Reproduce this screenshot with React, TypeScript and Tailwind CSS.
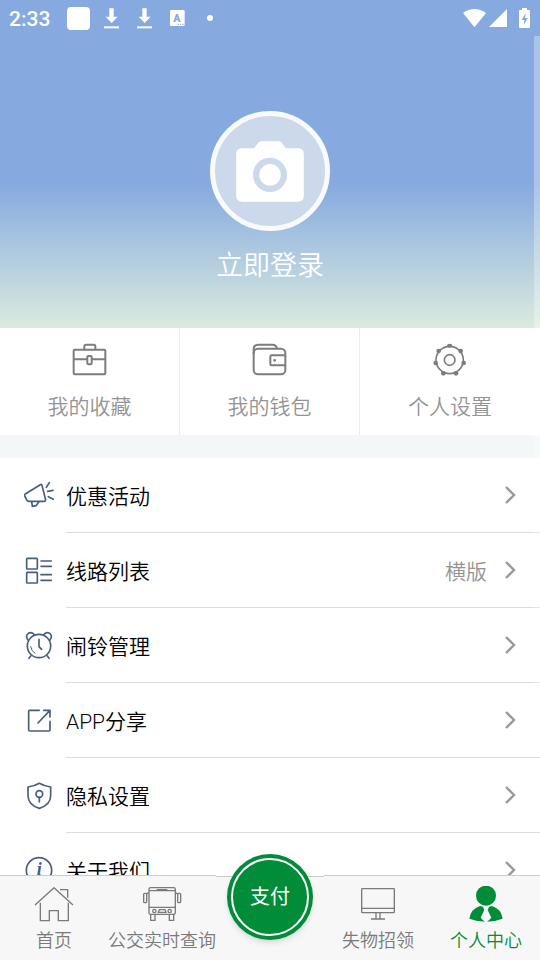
import type { ReactNode } from "react";

function MenuIcon({ children }: { children: ReactNode }) {
  return (
    <svg
      viewBox="0 0 90 90"
      className="size-[30px]"
      fill="none"
      stroke="currentColor"
      strokeWidth="5"
      strokeLinecap="round"
      strokeLinejoin="round"
      aria-hidden="true"
    >
      {children}
    </svg>
  );
}

function QuickIcon({ children }: { children: ReactNode }) {
  return (
    <svg viewBox="0 0 108 108" className="size-9" fill="none" stroke="currentColor" strokeWidth="6" strokeLinejoin="round" aria-hidden="true">
      {children}
    </svg>
  );
}

function TabIcon({ children }: { children: ReactNode }) {
  return (
    <svg viewBox="0 0 120 108" className="h-9 w-10" fill="none" stroke="currentColor" strokeWidth="4" aria-hidden="true">
      {children}
    </svg>
  );
}

function DownloadIcon() {
  return (
    <svg viewBox="0 0 45 63" className="h-[21px] w-[15px]" fill="currentColor" aria-hidden="true">
      <path d="M16 1h13v25h12L23 45 5 26h11z" />
      <path d="M0 55h45v6H0z" />
    </svg>
  );
}

const quickLinks = [
  {
    label: "我的收藏",
    icon: (
      <>
        <rect x="5" y="23" width="95" height="74" rx="3" />
        <path d="M37 23V13q0-5 5-5h23q5 0 5 5v10M5 52h41M59 52h41" />
        <rect x="46" y="42" width="13" height="25" rx="3" />
      </>
    ),
  },
  {
    label: "我的钱包",
    icon: (
      <>
        <rect x="5" y="20" width="95" height="77" rx="13" />
        <path d="M5 36V22Q5 8 19 8h42q12 0 14 12M100 40H59q-4 0-4 4v22q0 4 4 4h41" />
        <circle cx="68" cy="55" r="4" fill="currentColor" stroke="none" />
      </>
    ),
  },
  {
    label: "个人设置",
    icon: (
      <>
        <circle cx="53" cy="54" r="41" strokeWidth="5" />
        <circle cx="53" cy="54" r="16" strokeWidth="5" />
        <g fill="currentColor" stroke="none">
          <ellipse cx="53" cy="11" rx="8" ry="6" />
          <circle cx="86" cy="27" r="7" />
          <circle cx="95" cy="63" r="7" />
          <circle cx="72" cy="94" r="7" />
          <circle cx="34" cy="94" r="7" />
          <circle cx="11" cy="63" r="7" />
          <circle cx="20" cy="27" r="7" />
        </g>
      </>
    ),
  },
];

const menuItems = [
  {
    label: "优惠活动",
    icon: (
      <>
        <path d="M5 38L49 11q4-2 5 2l11 44q0 4-4 4H14q-4 0-5-3L2 45q-1-4 3-7zM23 62l2 14 11-2 9-12" />
        <path d="M67 19l9-14M71 31l16-3M73 47l15 8" />
      </>
    ),
  },
  {
    label: "线路列表",
    value: "横版",
    icon: (
      <>
        <rect x="8" y="7" width="32" height="32" rx="2" />
        <rect x="8" y="49" width="32" height="32" rx="2" />
        <path d="M51 15h31M51 31h31M51 56h31M51 73h31" />
      </>
    ),
  },
  {
    label: "闹铃管理",
    icon: (
      <>
        <circle cx="45" cy="45" r="35" />
        <path d="M12 27Q3 14 13 7q11-6 19 5M78 27q9-13-1-20-11-6-19 5M45 25v22l8 8M20 75l-5 7M70 75l5 7" />
        <path d="M20 47q2 14 13 20" strokeWidth="3" />
      </>
    ),
  },
  {
    label: "APP分享",
    icon: <path d="M46 13H17q-3 0-3 3v56q0 3 3 3h58q3 0 3-3V46M59 13h19v20M42 51l35-37" />,
  },
  {
    label: "隐私设置",
    icon: (
      <>
        <path d="M46 7q15 9 34 11v27q-1 27-34 37Q13 72 12 45V18q19-2 34-11z" />
        <circle cx="46" cy="39" r="10" />
        <path d="M46 49v14" />
      </>
    ),
  },
  {
    label: "关于我们",
    icon: (
      <>
        <circle cx="45" cy="43" r="38" />
        <text
          x="46"
          y="58"
          textAnchor="middle"
          fill="currentColor"
          stroke="none"
          className="font-['Liberation_Serif',serif] text-[54px] font-bold italic"
        >
          i
        </text>
      </>
    ),
  },
];

const leftTabs = [
  {
    label: "首页",
    icon: <path d="M3 57L60 5l57 52M19 50v54h27V74h27v30h30V50M78 11h23v24" strokeLinejoin="round" />,
  },
  {
    label: "公交实时查询",
    icon: (
      <>
        <rect x="21" y="5" width="79" height="80" rx="5" />
        <path d="M21 14h79M21 64h79M44 11h32M14 24q0-3 7-3M107 24q0-3-7-3" />
        <rect x="5" y="22" width="9" height="28" rx="3" />
        <rect x="107" y="22" width="9" height="28" rx="3" />
        <circle cx="37" cy="75" r="5" />
        <circle cx="83" cy="75" r="5" />
        <path d="M52 71h17l3 8H49z" />
        <path d="M26 86v17h13V86M82 86v17h13V86" />
      </>
    ),
  },
];

const rightTabs = [
  {
    label: "失物招领",
    icon: (
      <>
        <rect x="11" y="8" width="98" height="72" rx="2" />
        <path d="M11 67h98M54 80v19M66 80v19M39 99h42" />
      </>
    ),
  },
  {
    label: "个人中心",
    active: true,
    icon: (
      <g stroke="none">
        <circle cx="60" cy="29" r="30" fill="currentColor" />
        <path d="M42 60Q14 69 10 98q50 19 100 0-4-29-32-38-18 6-36 0z" fill="currentColor" />
        <path d="M54 60h12l3 3-4 9 11 23-13 13h-6L44 95l11-23-4-9z" fill="#f7f7f7" />
      </g>
    ),
  },
];

interface TabProps {
  label: string;
  icon: ReactNode;
  active?: boolean;
}

function Tab({ label, icon, active }: TabProps) {
  return (
    <a
      href="#"
      aria-current={active ? "page" : undefined}
      className={`flex flex-1 flex-col items-center gap-[5px] border-t border-[#cccccc] bg-[#f7f7f7] pt-[10px] ${
        active ? "text-[#008c38]" : "text-[#7a7a7a]"
      }`}
    >
      <TabIcon>{icon}</TabIcon>
      <span className="text-[18px] leading-7 whitespace-nowrap">{label}</span>
    </a>
  );
}

function StatusBar() {
  return (
    <div className="flex h-9 shrink-0 items-center bg-[#86a9df] pr-[10px] pl-[9px] text-white">
      <span className="w-[58px] pt-[2px] text-[21px] leading-8 font-medium">2:33</span>
      <div className="flex flex-1 items-center">
        <span className="mr-[14px] size-[23px] rounded-[4px] bg-white" />
        <div className="flex items-center gap-[18px]">
          <DownloadIcon />
          <DownloadIcon />
          <svg viewBox="0 0 45 48" className="h-4 w-[15px]" aria-hidden="true">
            <rect width="44" height="48" rx="4" fill="currentColor" />
            <text x="21" y="35" textAnchor="middle" fill="#86a9df" className="text-[32px] font-black">A</text>
            <path d="M23 43h4M30 43h4M37 43h4" stroke="#86a9df" strokeWidth="3" />
          </svg>
        </div>
        <span className="ml-[22px] size-[6px] rounded-full bg-white" />
      </div>
      <div className="flex items-center">
        <svg viewBox="0 0 68 56" className="h-[19px] w-[23px]" fill="currentColor" aria-hidden="true">
          <path d="M0 12Q34-12 68 12L34 54z" />
        </svg>
        <svg viewBox="0 0 54 54" className="ml-[3px] size-[18px]" fill="currentColor" aria-hidden="true">
          <path d="M54 0v54H0z" />
        </svg>
        <svg viewBox="0 0 33 60" className="ml-3 h-5 w-[11px]" fill="currentColor" aria-hidden="true">
          <path d="M9 0h15v6h6q3 0 3 3v48q0 3-3 3H3q-3 0-3-3V9q0-3 3-3h6z" />
          <path d="M20 15L8 36h8l-2 16 12-22h-8z" fill="#86a9df" />
        </svg>
      </div>
    </div>
  );
}

export default function App() {
  return (
    <div className="flex h-screen flex-col overflow-hidden bg-white font-[Roboto,'Noto_Sans_CJK_SC',sans-serif] font-[350]">
      <StatusBar />
      <main className="relative flex-1 overflow-hidden">
        <header className="flex flex-col items-center bg-linear-to-b from-[#86a9df] from-50% to-[#dbebde] pt-[75px] pb-[42px]">
          <button
            type="button"
            aria-label="上传头像"
            className="flex size-[120px] items-center justify-center rounded-full border-[5px] border-[#f8fafe] bg-[#ccd9eb]"
          >
            <svg viewBox="0 0 204 184" className="h-[61px] w-[68px]" aria-hidden="true">
              <path
                d="M18 22h36L68 4q3-3 8-3h52q5 0 8 3l14 18h36q18 0 18 18v125q0 18-18 18H18q-18 0-18-18V40q0-18 18-18z"
                fill="#fff"
              />
              <circle cx="102" cy="102" r="42" fill="#fff" stroke="#ccd9eb" strokeWidth="19" />
            </svg>
          </button>
          <button type="button" className="mt-[15px] text-[27px] leading-10 text-white">
            立即登录
          </button>
        </header>

        <nav className="grid grid-cols-3 divide-x divide-[#ececec]">
          {quickLinks.map((link) => (
            <a key={link.label} href="#" className="flex flex-col items-center pt-[14px] pb-3 text-[#7d7d7d]">
              <QuickIcon>{link.icon}</QuickIcon>
              <span className="mt-[13px] text-[21px] leading-8 text-[#949494]">{link.label}</span>
            </a>
          ))}
        </nav>

        <div className="h-[23px] bg-[#f3f7f8]" />

        <ul>
          {menuItems.map((item) => (
            <li key={item.label}>
              <button type="button" className="flex h-[75px] w-full items-center gap-3 pl-6 text-left text-[21px] text-black">
                <span className="text-[#4a5d7e]">
                  <MenuIcon>{item.icon}</MenuIcon>
                </span>
                <span className="flex h-full flex-1 items-center border-b border-[#dcdcdc] pr-6">
                  <span className="flex-1 pt-[5px]">{item.label}</span>
                  {item.value && <span className="mr-[18px] pt-[5px] text-[#949494]">{item.value}</span>}
                  <svg viewBox="0 0 11 18" className="h-[18px] w-[11px]" fill="none" stroke="#999999" strokeWidth="2.4" aria-hidden="true">
                    <path d="M1 1l8 8-8 8" />
                  </svg>
                </span>
              </button>
            </li>
          ))}
        </ul>

        <div className="absolute top-0 right-0 h-[670px] w-[6px] bg-white/30" />
      </main>

      <nav className="flex h-[85px] shrink-0">
        {leftTabs.map((tab) => (
          <Tab key={tab.label} {...tab} />
        ))}
        <div className="relative mt-px flex flex-1 justify-center border-t border-[#cccccc] bg-[#f7f7f7]">
          <button
            type="button"
            className="absolute -top-[23px] size-[86px] rounded-full bg-[#008c38] p-1 text-[20px] font-normal text-white shadow-md"
          >
            <span className="flex size-full items-center justify-center rounded-full border-2 border-white">支付</span>
          </button>
        </div>
        {rightTabs.map((tab) => (
          <Tab key={tab.label} {...tab} />
        ))}
      </nav>
    </div>
  );
}
